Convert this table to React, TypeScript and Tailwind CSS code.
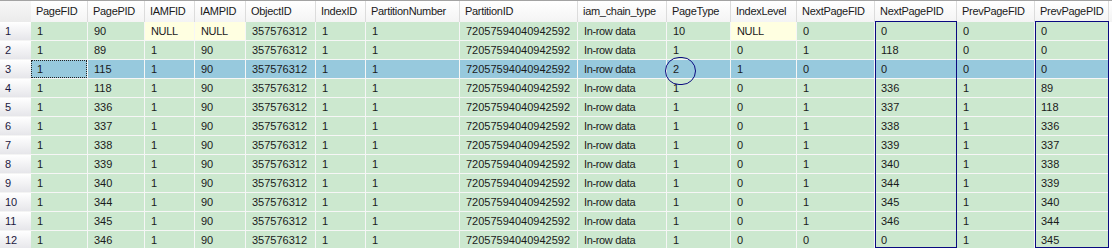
import React from 'react';

// Query results grid (SSMS style) with hand-drawn annotations
const columns: { name: string; w: string }[] = [
  { name: 'PageFID', w: 'w-[57px]' },
  { name: 'PagePID', w: 'w-[57px]' },
  { name: 'IAMFID', w: 'w-[50px]' },
  { name: 'IAMPID', w: 'w-[51px]' },
  { name: 'ObjectID', w: 'w-[70px]' },
  { name: 'IndexID', w: 'w-[50px]' },
  { name: 'PartitionNumber', w: 'w-[94px]' },
  { name: 'PartitionID', w: 'w-[118px]' },
  { name: 'iam_chain_type', w: 'w-[89px]' },
  { name: 'PageType', w: 'w-[64px]' },
  { name: 'IndexLevel', w: 'w-[66px]' },
  { name: 'NextPageFID', w: 'w-[78px]' },
  { name: 'NextPagePID', w: 'w-[82px]' },
  { name: 'PrevPageFID', w: 'w-[78px]' },
  { name: 'PrevPagePID', w: 'w-[74px]' },
];

const tail = ['357576312', '1', '1', '72057594040942592', 'In-row data'];

const rows: string[][] = [
  ['1', '90', 'NULL', 'NULL', ...tail, '10', 'NULL', '0', '0', '0', '0'],
  ['1', '89', '1', '90', ...tail, '1', '0', '1', '118', '0', '0'],
  ['1', '115', '1', '90', ...tail, '2', '1', '0', '0', '0', '0'],
  ['1', '118', '1', '90', ...tail, '1', '0', '1', '336', '1', '89'],
  ['1', '336', '1', '90', ...tail, '1', '0', '1', '337', '1', '118'],
  ['1', '337', '1', '90', ...tail, '1', '0', '1', '338', '1', '336'],
  ['1', '338', '1', '90', ...tail, '1', '0', '1', '339', '1', '337'],
  ['1', '339', '1', '90', ...tail, '1', '0', '1', '340', '1', '338'],
  ['1', '340', '1', '90', ...tail, '1', '0', '1', '344', '1', '339'],
  ['1', '344', '1', '90', ...tail, '1', '0', '1', '345', '1', '340'],
  ['1', '345', '1', '90', ...tail, '1', '0', '1', '346', '1', '344'],
  ['1', '346', '1', '90', ...tail, '1', '0', '0', '0', '1', '345'],
];

const SELECTED = 2;

const App: React.FC = () => {
  return (
    <div className="relative w-[1112px] h-[248px] overflow-hidden bg-white font-['Liberation_Sans',Arial,sans-serif] text-[11px] text-[#1a1a1a]">
      {/* Header */}
      <div className="flex h-[22px] border-t border-[#a3a3a3]">
        <div className="w-[31px] shrink-0 bg-gradient-to-b from-[#f7f7f7] to-[#ebebeb]" />
        {columns.map((c) => (
          <div
            key={c.name}
            className={`${c.w} shrink-0 border-r border-[#dcdcdc] bg-gradient-to-b from-white to-[#f4f4f4] pl-[5px] leading-[20px] tracking-[-0.3px] whitespace-nowrap overflow-hidden`}
          >
            {c.name}
          </div>
        ))}
        <div className="flex-1 bg-gradient-to-b from-white to-[#f4f4f4]" />
      </div>

      {/* Rows */}
      {rows.map((r, i) => {
        const selected = i === SELECTED;
        return (
          <div key={i} className="flex h-[19px]">
            <div className="w-[31px] shrink-0 border-b border-[#f4f4f4] bg-gradient-to-b from-white to-[#e6e6ea] pl-[5px] leading-[18px] text-[#1c1840]">
              {i + 1}
            </div>
            {r.map((v, j) => {
              const isNull = v === 'NULL';
              const bg = selected ? 'bg-[#97c9dd]' : isNull ? 'bg-[#ffffe1]' : 'bg-[#cce8cf]';
              const isText = isNull || v === 'In-row data';
              return (
                <div
                  key={j}
                  className={`${columns[j].w} shrink-0 border-r border-b border-[#f6f6f6] ${bg} leading-[18px] whitespace-nowrap overflow-hidden ${isText ? 'tracking-[-0.35px]' : ''}`}
                >
                  {selected && j === 0 ? (
                    <div className="h-full border border-dotted border-[#222] pl-[5px] leading-[16px]">{v}</div>
                  ) : (
                    <div className="pl-[6px]">{v}</div>
                  )}
                </div>
              );
            })}
          </div>
        );
      })}

      {/* Annotations drawn over the grid */}
      <div className="absolute left-[875px] top-[21px] w-[82px] h-[227px] border border-[#0a0a80]" />
      <div className="absolute left-[1035px] top-[21px] w-[74px] h-[227px] border border-[#0a0a80]" />
      <div className="absolute left-[665px] top-[57px] w-[31px] h-[28px] rounded-full border border-[#0a0a80]" />
    </div>
  );
};

export default App;
